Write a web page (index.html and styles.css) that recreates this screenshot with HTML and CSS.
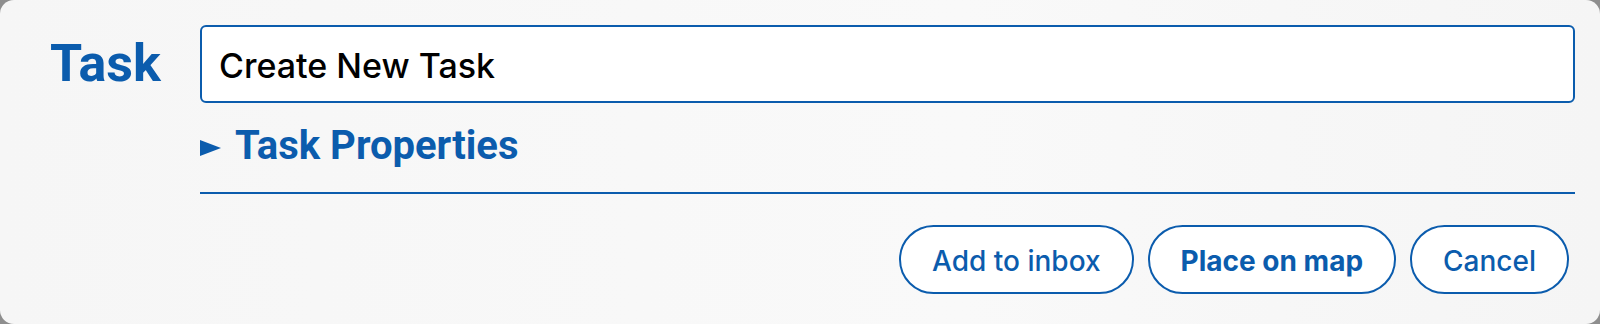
FILE: index.html
```html
<!DOCTYPE html>
<html lang="en">
<head>
<meta charset="utf-8">
<title>Create Task</title>
<link rel="stylesheet" href="styles.css">
</head>
<body>
<div class="panel">
  <div class="label">Task</div>
  <div class="content">
    <div class="input">Create New Task</div>
    <div class="props">
      <svg class="arrow" width="21" height="16" viewBox="0 0 21 16"><polygon points="0,0 21,8 0,16" fill="#0b5cad"/></svg>
      <span>Task Properties</span>
    </div>
    <div class="divider"></div>
    <div class="actions">
      <button class="btn">Add to inbox</button>
      <button class="btn primary">Place on map</button>
      <button class="btn">Cancel</button>
    </div>
  </div>
</div>
</body>
</html>
```

FILE: styles.css
```css
html, body {
  margin: 0;
  padding: 0;
  height: 100%;
}
body {
  background: #8e8e8e;
  font-family: Roboto, Inter, "Liberation Sans", sans-serif;
}
.panel {
  box-sizing: border-box;
  height: 324px;
  border-radius: 14px;
  background: linear-gradient(90deg, #f6f6f6 0%, #f9f9f9 60%, #f5f5f5 100%);
  padding: 25px 25px 0 50px;
  display: grid;
  grid-template-columns: 110px 1fr;
  column-gap: 40px;
  align-items: start;
}
.label {
  font-size: 52px;
  font-weight: 700;
  line-height: 78px;
  color: #0b5cad;
  white-space: nowrap;
}
.content {
  display: flex;
  flex-direction: column;
}
.input {
  box-sizing: border-box;
  height: 78px;
  border: 2px solid #0b5cad;
  border-radius: 6px;
  background: #ffffff;
  padding: 2px 17px 0;
  font-family: Inter, Roboto, sans-serif;
  font-size: 34px;
  font-weight: 500;
  line-height: 74px;
  color: #000000;
}
.props {
  margin-top: 19px;
  height: 48px;
  display: flex;
  align-items: center;
  gap: 14px;
  color: #0b5cad;
  font-size: 40px;
  font-weight: 700;
  line-height: 48px;
}
.arrow {
  flex: none;
  margin-top: 3px;
}
.divider {
  margin-top: 22px;
  height: 2px;
  background: #0b5cad;
}
.actions {
  margin-top: 31px;
  margin-right: 6px;
  display: flex;
  justify-content: flex-end;
  gap: 14px;
}
.btn {
  box-sizing: border-box;
  height: 69px;
  border: 2px solid #0b5cad;
  border-radius: 35px;
  background: #ffffff;
  color: #0b5cad;
  font-family: Inter, Roboto, sans-serif;
  font-size: 28px;
  font-weight: 500;
  padding: 3px 31px 0;
}
.btn.primary {
  font-weight: 700;
}
```
